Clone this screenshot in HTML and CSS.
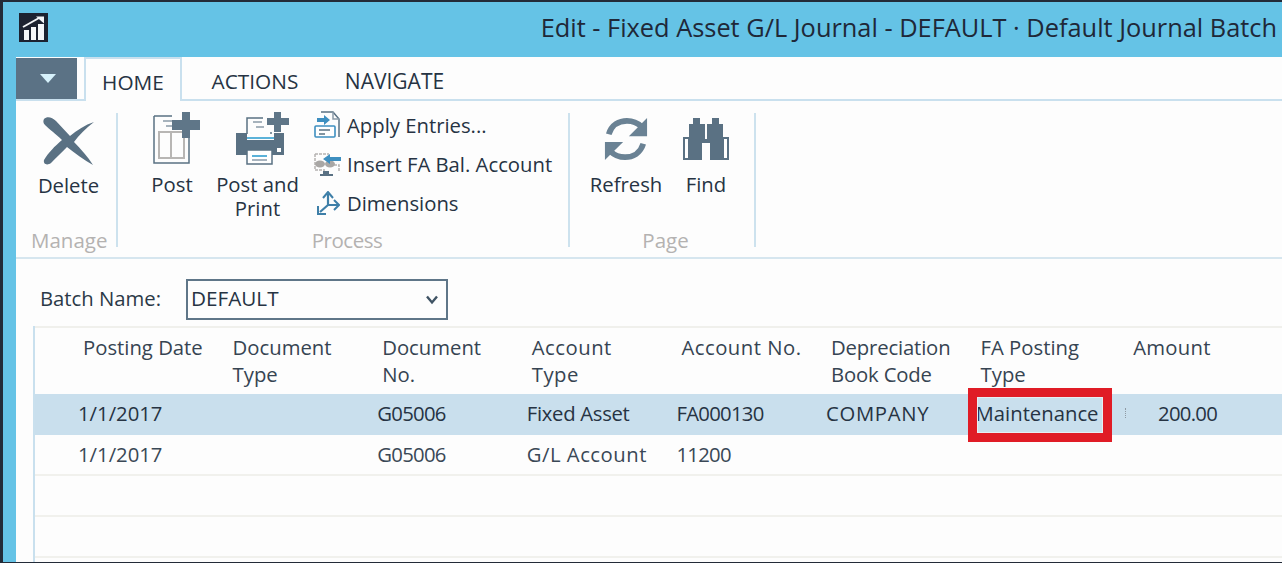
FILE: index.html
```html
<!DOCTYPE html>
<html lang="en">
<head>
<meta charset="utf-8">
<title>Edit - Fixed Asset G/L Journal</title>
<link rel="stylesheet" href="styles.css">
</head>
<body>
<div class="window">
  <header class="titlebar">
    <svg class="app-icon" width="29" height="29" viewBox="0 0 29 29">
      <rect width="29" height="29" fill="#1c2230"/>
      <path d="M5 17h5v10H5zM12 14h5v13h-5zM19 11h6v16h-6z" fill="#f4f6f8"/>
      <path d="M4 14 L20 5" stroke="#f4f6f8" stroke-width="2" fill="none"/>
      <path d="M17 3.5h8v7z" fill="#f4f6f8"/>
    </svg>
    <h1 class="title">Edit - Fixed Asset G/L Journal - DEFAULT · Default Journal Batch</h1>
  </header>
  <main class="content">
    <nav class="tabs">
      <button class="menu-btn"><span class="menu-arrow"></span></button>
      <div class="tab tab-active">HOME</div>
      <div class="tab tab-actions">ACTIONS</div>
      <div class="tab tab-navigate">NAVIGATE</div>
    </nav>
    <section class="ribbon">
      <div class="group group-manage">
        <div class="group-items">
          <div class="big-btn btn-delete">
            <svg class="big-icon" width="54" height="50" viewBox="0 0 54 50">
              <path d="M2 3C5 0 10 1 14 5L28 20C35 14 43 9 52 6C44 12 37 19 32 26C39 33 46 41 51 49C42 44 33 37 25 31C20 36 14 42 9 47C5 50 1 48 2 44C6 37 13 30 20 24C14 18 7 13 3 9C1 7 1 5 2 3Z" fill="#5a7183"/>
            </svg>
            <span>Delete</span>
          </div>
        </div>
        <div class="group-label">Manage</div>
      </div>
      <div class="group group-process">
        <div class="group-items">
          <div class="big-btn btn-post">
            <svg class="big-icon" width="47" height="54" viewBox="0 0 47 54">
              <path d="M1 5h18M1 5v47h35V27" fill="none" stroke="#5a7183" stroke-width="1.500"/>
              <path d="M6 21h25v26H6zM18 21v26" fill="none" stroke="#b8b6b4" stroke-width="2"/>
              <path d="M10 10h9M13 15h6" stroke="#8a9aa8" stroke-width="1.500"/>
              <path d="M29 1h8v8h10v10H37v8h-8v-8H19V9h10z" fill="#5f7688"/>
            </svg>
            <span>Post</span>
          </div>
          <div class="big-btn btn-print">
            <svg class="big-icon" width="56" height="54" viewBox="0 0 56 54">
              <path d="M12 23V7h16M36 21v2" fill="none" stroke="#5a7183" stroke-width="1.500"/>
              <path d="M18 11h9M21 16h8" stroke="#8a9aa8" stroke-width="1.500"/>
              <path d="M39 1h7v6h8v7h-8v7h-7v-7h-7V7h7z" fill="#5f7688"/>
              <path d="M1 22h11v7h27v-7h10v22H37v-5H12v5H1z" fill="#5a7183"/>
              <path d="M12 27h27" stroke="#5bb2d9" stroke-width="2"/>
              <rect x="42" y="37" width="4" height="4" fill="#fff"/>
              <rect x="12" y="39" width="25" height="14" fill="#fff" stroke="#5a7183" stroke-width="1.500"/>
              <path d="M17 45h15" stroke="#5bb2d9" stroke-width="2"/>
              <path d="M17 49h15" stroke="#8a9aa8" stroke-width="1.500"/>
            </svg>
            <span>Post and<br>Print</span>
          </div>
          <ul class="small-list">
            <li class="small-btn">
              <svg width="27" height="28" viewBox="0 0 27 28">
                <path d="M7 1h12l6 7v18" fill="none" stroke="#5a7183" stroke-width="1.500"/>
                <path d="M19 1v7h6" fill="none" stroke="#8a9aa8" stroke-width="1.500"/>
                <path d="M3 7h7V4l6 5-6 5v-3H3z" fill="#3e8fc0"/>
                <rect x="1" y="15" width="20" height="11" rx="1" fill="#fff" stroke="#3e8fc0" stroke-width="1.600"/>
                <path d="M5 19h11M5 23h6" stroke="#5a7183" stroke-width="1.500"/>
              </svg>
              <span>Apply Entries...</span>
            </li>
            <li class="small-btn">
              <svg width="27" height="27" viewBox="0 0 27 27">
                <path d="M1 3h14M20 14h5v6M1 3v16h10" fill="none" stroke="#b5b3b1" stroke-width="1.500" stroke-dasharray="3 1"/>
                <ellipse cx="6" cy="13" rx="5" ry="3.500" fill="#a9a7a5"/>
                <ellipse cx="16" cy="13" rx="5" ry="3.500" fill="#a9a7a5"/>
                <path d="M9 20h6v3h4v2H6v-2h3z" fill="#5a7183"/>
                <path d="M27 6H16V3l-7 5 7 5v-3h11z" fill="#3e8fc0"/>
              </svg>
              <span>Insert FA Bal. Account</span>
            </li>
            <li class="small-btn">
              <svg class="dim-icon" width="23" height="24" viewBox="0 0 23 24">
                <path d="M11 14V3M11 14l-8 7M11 14h10" fill="none" stroke="#3e7fa8" stroke-width="2.200"/>
                <path d="M6 7l5-6 5 6M1 15v8h8M17 9l5 5-5 5" fill="none" stroke="#3e7fa8" stroke-width="2"/>
              </svg>
              <span>Dimensions</span>
            </li>
          </ul>
        </div>
        <div class="group-label">Process</div>
      </div>
      <div class="group group-page">
        <div class="group-items">
          <div class="big-btn btn-refresh">
            <svg class="big-icon" width="46" height="46" viewBox="0 0 48 48">
              <path d="M6 19C9 9 17 5 25 5c6 0 11 2 15 6" fill="none" stroke="#6a8294" stroke-width="6"/>
              <path d="M46 2v19H27z" fill="#6a8294"/>
              <path d="M42 29c-3 10-11 14-19 14-6 0-11-2-15-6" fill="none" stroke="#6a8294" stroke-width="6"/>
              <path d="M2 46V27h19z" fill="#6a8294"/>
            </svg>
            <span>Refresh</span>
          </div>
          <div class="big-btn btn-find">
            <svg class="big-icon" width="46" height="43" viewBox="0 0 46 43">
              <path d="M10 0h7v6h5v15h2V6h5V0h7v6h4v13h6v23H27V25h-8v17H0V19h6V6h4z" fill="#5a7183"/>
              <path d="M2 21h3v19H2zM41 21h3v19h-3z" fill="#fff"/>
            </svg>
            <span>Find</span>
          </div>
        </div>
        <div class="group-label">Page</div>
      </div>
    </section>
    <div class="batch-row">
      <label class="batch-label">Batch Name:</label>
      <div class="batch-select">
        <span>DEFAULT</span>
        <svg width="12" height="10" viewBox="0 0 12 10"><path d="M1 1.500 6 7.500l5-6" fill="none" stroke="#3f5364" stroke-width="2.400"/></svg>
      </div>
    </div>
    <div class="grid">
      <div class="grid-head">
        <div class="hcell">Posting Date</div>
        <div class="hcell">Document<br>Type</div>
        <div class="hcell">Document<br>No.</div>
        <div class="hcell hcell-wide">Account<br>Type</div>
        <div class="hcell hcell-wide">Account No.</div>
        <div class="hcell hcell-tight">Depreciation<br>Book Code</div>
        <div class="hcell">FA Posting<br>Type</div>
        <div class="hcell hcell-amount">Amount</div>
      </div>
      <div class="grid-row row-selected">
        <div class="cell">1/1/2017</div>
        <div class="cell"></div>
        <div class="cell cell-code">G05006</div>
        <div class="cell cell-asset">Fixed Asset</div>
        <div class="cell cell-code">FA000130</div>
        <div class="cell cell-wide">COMPANY</div>
        <div class="cell cell-marked">Maintenance<span class="red-box"></span></div>
        <div class="cell cell-amount">200.00</div>
      </div>
      <div class="grid-row">
        <div class="cell">1/1/2017</div>
        <div class="cell"></div>
        <div class="cell cell-code">G05006</div>
        <div class="cell cell-glacct">G/L Account</div>
        <div class="cell cell-code">11200</div>
        <div class="cell"></div>
        <div class="cell"></div>
        <div class="cell"></div>
      </div>
      <div class="grid-row"></div>
      <div class="grid-row"></div>
    </div>
  </main>
</div>
</body>
</html>
```

FILE: styles.css
```css
* { box-sizing: border-box; }
html, body { margin: 0; padding: 0; height: 563px; overflow: hidden; }
body {
  font-family: "Open Sans", "Noto Sans", "Liberation Sans", sans-serif;
  color: #2b3947;
  background: #232b38;
}
.window {
  height: 560px;
  margin: 2px 0 0 3px;
  background: #65c3e6;
  display: flex;
  flex-direction: column;
}
.titlebar {
  height: 55px;
  flex: none;
  display: flex;
  align-items: flex-start;
  justify-content: space-between;
  padding: 11px 5px 0 16px;
}
.app-icon { flex: none; }
.title {
  margin: -2px 0 0;
  font-size: 25.360px;
  line-height: 32px;
  font-weight: 400;
  color: #1f2838;
  white-space: nowrap;
}
.content {
  flex: 1;
  min-height: 0;
  margin-left: 13px;
  background: #fdfdfd;
  display: flex;
  flex-direction: column;
}
.tabs {
  height: 44px;
  flex: none;
  display: flex;
  align-items: flex-end;
  padding-top: 1px;
  border-bottom: 2px solid #c9e0ee;
}
.menu-btn {
  width: 61px;
  height: 41px;
  margin: 0;
  padding: 0 0 0 3px;
  border: 0;
  background: #5b7285;
  display: flex;
  align-items: center;
  justify-content: center;
}
.menu-arrow {
  width: 0;
  height: 0;
  border-left: 8px solid transparent;
  border-right: 8px solid transparent;
  border-top: 9px solid #d6f1fb;
}
.tab {
  height: 42px;
  font-size: 20.800px;
  line-height: 48px;
  color: #263343;
  text-align: center;
}
.tab-active {
  width: 98px;
  margin: 0 0 -2px 7px;
  height: 44px;
  background: #fdfdfd;
  border: 2px solid #c9e0ee;
  border-bottom: 0;
  line-height: 46px;
}
.tab-actions { width: 146px; }
.tab-navigate { width: 121px; margin-left: 6px; font-size: 21px; }
.ribbon {
  height: 158px;
  flex: none;
  display: flex;
  padding-top: 12px;
  border-bottom: 2px solid #d6e6ef;
}
.group {
  display: flex;
  flex-direction: column;
  height: 134px;
  border-right: 2px solid #cde2ee;
}
.group-manage { width: 102px; }
.group-process { width: 452px; }
.group-page { width: 186px; }
.group-items { flex: 1; display: flex; min-height: 0; }
.group-label {
  height: 20px;
  font-size: 20.500px;
  line-height: 26px;
  color: #b4b2b1;
  text-align: center;
}
.group-manage .group-label { text-align: left; padding-left: 15px; }
.group-process .group-label { padding-left: 8px; letter-spacing: -0.5px; }
.group-page .group-label { padding-left: 7px; }
.big-btn {
  display: flex;
  flex-direction: column;
  align-items: center;
  font-size: 20.300px;
  line-height: 24px;
  color: #263343;
  text-align: center;
}
.big-btn span { margin-top: 7px; white-space: nowrap; }
.big-icon { flex: none; }
.btn-delete { width: 101px; padding-left: 5px; padding-top: 3px; }
.btn-post { width: 98px; padding-left: 10px; margin-top: -2px; }
.btn-post .big-icon { margin-left: 8px; }
.btn-print { width: 83px; margin-top: -2px; }
.btn-print .big-icon { margin-left: 10px; }
.small-list {
  list-style: none;
  margin: -3px 0 0 15px;
  padding: 0;
  display: flex;
  flex-direction: column;
  gap: 9px;
}
.small-btn {
  display: flex;
  align-items: center;
  height: 30px;
  gap: 6px;
  font-size: 20.300px;
  color: #263343;
  white-space: nowrap;
}
.small-btn svg { flex: none; }
.dim-icon { margin-left: 3px; margin-right: 1px; }
.btn-refresh { width: 112px; margin-top: 3px; }
.btn-refresh span { margin-top: 10px; }
.btn-find { width: 48px; margin-top: 5px; }
.btn-find span { margin-top: 11px; }
.batch-row {
  height: 67px;
  flex: none;
  display: flex;
  align-items: center;
  padding: 20px 0 6px 24px;
}
.batch-label { width: 146px; margin-top: -4px; font-size: 20.300px; color: #2b3947; }
.batch-select {
  width: 262px;
  height: 41px;
  border: 2px solid #5f7688;
  display: flex;
  align-items: center;
  justify-content: space-between;
  padding: 0 8px 0 3px;
  font-size: 20.700px;
  color: #263343;
}
.batch-select span { margin-top: -4px; }
.grid {
  flex: 1;
  margin-left: 17px;
  border-left: 2px solid #c9e0ee;
  min-height: 0;
}
.grid-head {
  height: 68px;
  border-top: 2px solid #f0f0ec;
  display: grid;
  grid-template-columns: repeat(8, 149.600px);
  font-size: 20.300px;
  line-height: 27px;
  color: #364452;
  padding-top: 6px;
}
.hcell { padding-left: 48px; white-space: nowrap; }
.hcell-wide { letter-spacing: 0.5px; }
.hcell-tight { letter-spacing: -0.15px; }
.hcell-amount { padding-left: 51px; letter-spacing: 0.3px; }
.grid-row {
  height: 41px;
  display: grid;
  grid-template-columns: repeat(8, 149.600px);
  border-bottom: 2px solid #f1f1ed;
  font-size: 20.300px;
  line-height: 39px;
  color: #3a4856;
}
.row-selected { background: #c9dfed; border-bottom: 0; color: #263343; }
.cell { padding-left: 43px; white-space: nowrap; }
.cell-code { letter-spacing: -0.7px; }
.cell-asset { letter-spacing: -0.3px; }
.cell-glacct { letter-spacing: 0.5px; }
.cell-wide { letter-spacing: 0.7px; }
.cell-marked { position: relative; }
.cell-amount {
  position: relative;
  text-align: right;
  padding: 0;
  width: 135px;
  letter-spacing: -0.7px;
}
.cell-amount::before {
  content: "";
  position: absolute;
  left: 43px;
  top: 14px;
  height: 10px;
  border-left: 1px dotted #8f9aa3;
}
.red-box {
  position: absolute;
  left: 35px;
  top: -6px;
  width: 144px;
  height: 54px;
  border: 9px solid #e01c26;
  box-shadow: inset 0 0 0 1px #e6eef3;
}
```
